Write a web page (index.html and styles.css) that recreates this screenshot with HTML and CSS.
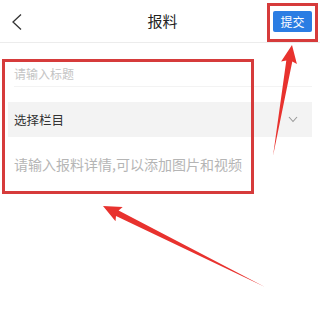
FILE: index.html
```html
<!DOCTYPE html>
<html lang="zh">
<head>
<meta charset="utf-8">
<link rel="stylesheet" href="styles.css">
</head>
<body>
<div class="page">
  <header class="header">
    <svg class="back" width="12" height="18" viewBox="0 0 12 18"><path d="M10 1.5 L2 9 L10 16.5" fill="none" stroke="#333" stroke-width="1.3"/></svg>
    <div class="title">报料</div>
    <div class="submit">提交</div>
  </header>
  <div class="form">
    <div class="row-title">请输入标题</div>
    <div class="row-select">
      <span>选择栏目</span>
      <svg width="10" height="7" viewBox="0 0 10 7"><path d="M1 1 L5 5.5 L9 1" fill="none" stroke="#999" stroke-width="1.1"/></svg>
    </div>
    <div class="row-detail">请输入报料详情,可以添加图片和视频</div>
  </div>
  <div class="mark mark-form"></div>
  <div class="mark mark-submit"></div>
  <svg class="arrows" width="320" height="317" viewBox="0 0 320 317">
    <polygon points="292,45 296.9,64.1 292.3,61.5 273,156 286.3,60.5 281.1,61.4" fill="#e8322e"/>
    <polygon points="103,206 122.7,206.9 118.6,210.5 265,287 116,215.9 115.5,221.2" fill="#e8322e"/>
  </svg>
</div>
</body>
</html>
```

FILE: styles.css
```css
html, body {
  margin: 0;
  padding: 0;
  background: #fff;
}
.page {
  position: relative;
  width: 320px;
  height: 317px;
  overflow: hidden;
  font-family: "Noto Sans CJK SC", "Noto Sans", sans-serif;
}
.header {
  height: 42px;
  display: grid;
  grid-template-columns: 1fr auto 1fr;
  align-items: center;
  border-bottom: 1px solid #ececec;
  padding: 0 8px 0 11px;
}
.back {
  justify-self: start;
  margin-top: 2px;
}
.title {
  font-size: 15px;
  color: #222;
  line-height: 20px;
  margin-left: 2px;
}
.submit {
  justify-self: end;
  width: 39px;
  height: 21px;
  background: #2b7de3;
  color: #fff;
  font-size: 12px;
  line-height: 21px;
  text-align: center;
  border-radius: 2px;
  margin-top: 1px;
}
.form {
  padding: 0 8px;
}
.row-title {
  height: 44px;
  box-sizing: border-box;
  padding: 23px 0 0 6px;
  font-size: 12px;
  line-height: 16px;
  color: #c4c4c4;
  border-bottom: 1px solid #f3f3f3;
  margin-left: 6px;
  padding-left: 0;
}
.row-select {
  margin-top: 15px;
  height: 35px;
  background: #f3f3f3;
  display: flex;
  align-items: center;
  justify-content: space-between;
  padding: 0 14px 0 6px;
  font-size: 12.5px;
  color: #333;
}
.row-select span {
  line-height: 16px;
}
.row-detail {
  padding: 18px 0 0 6px;
  font-size: 14px;
  line-height: 18px;
  color: #b5b5b5;
}
.mark {
  position: absolute;
  border: 3px solid #d63b3b;
  box-sizing: border-box;
}
.mark-form {
  left: 2px;
  top: 59px;
  width: 252px;
  height: 135px;
}
.mark-submit {
  left: 267px;
  top: 3px;
  width: 51px;
  height: 39px;
}
.arrows {
  position: absolute;
  left: 0;
  top: 0;
}
```
